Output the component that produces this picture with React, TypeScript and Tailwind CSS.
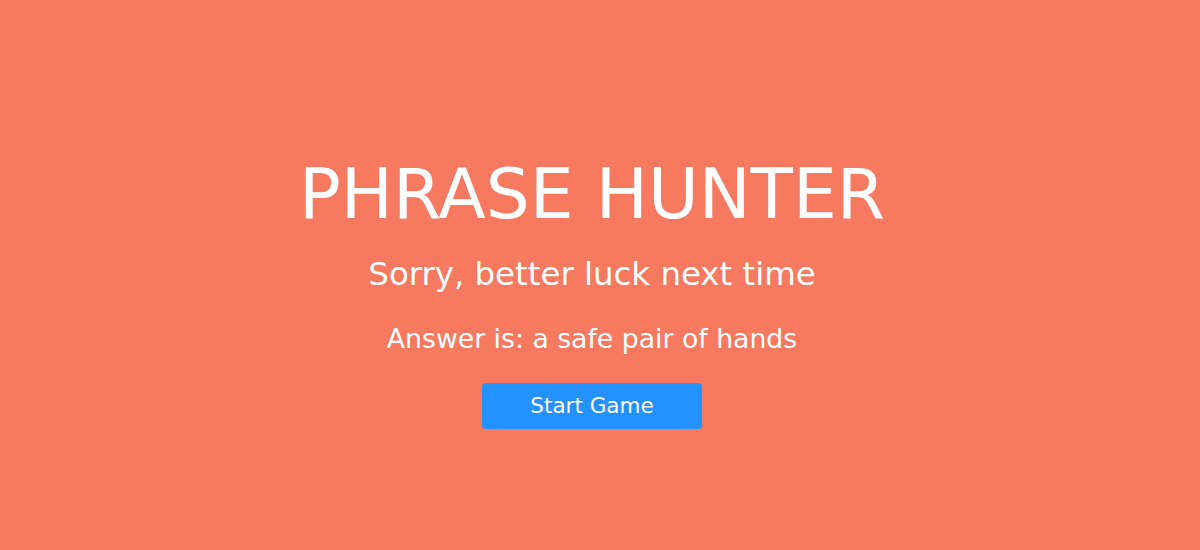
export default function App() {
  return (
    <div
      className="w-[1200px] h-[550px] bg-[#f67960] pr-[16px] flex flex-col items-center text-white"
      style={{ fontFamily: '"DejaVu Sans", "Open Sans", sans-serif' }}
    >
      <h1 className="mt-[154px] text-[69.4px] leading-[80px] font-normal">PHRASE HUNTER</h1>
      <h2 className="mt-[20px] text-[32.4px] leading-[40px] font-normal">Sorry, better luck next time</h2>
      <p className="mt-[28px] text-[26.7px] leading-[34px]">Answer is: a safe pair of hands</p>
      <button className="mt-[27px] w-[220px] h-[46px] rounded-[4px] bg-[#2192ff] text-[21.5px] text-white">
        Start Game
      </button>
    </div>
  );
}
